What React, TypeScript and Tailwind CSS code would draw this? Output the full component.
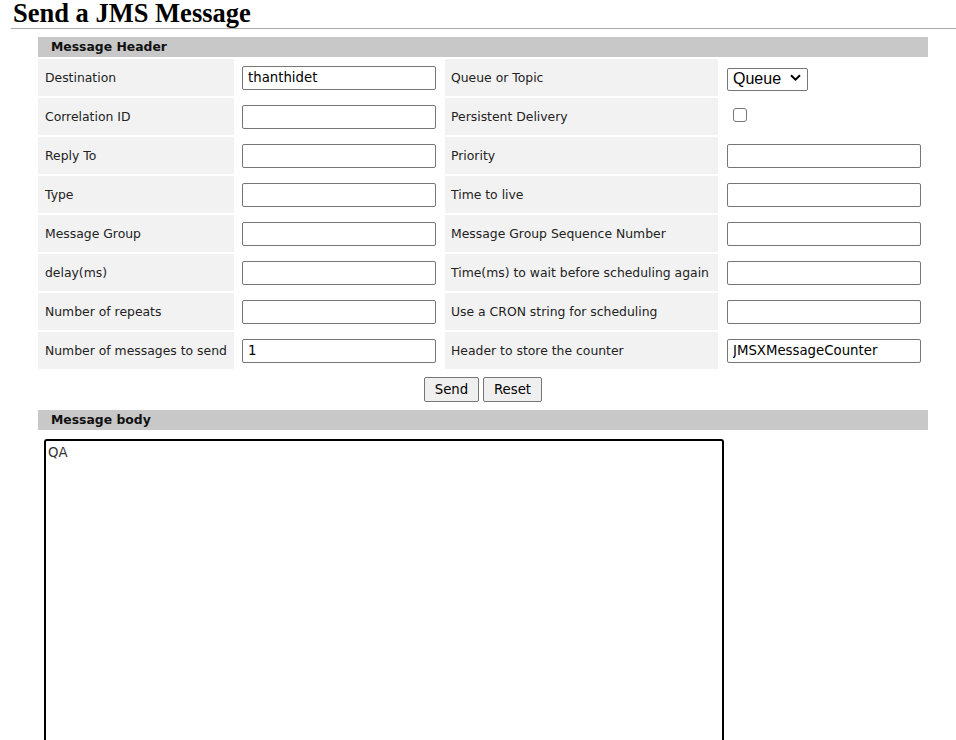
import React from 'react';

const font = { fontFamily: '"DejaVu Sans", Verdana, sans-serif' };

type Row = {
  left: string;
  leftValue?: string;
  right: string;
  rightKind: 'input' | 'select' | 'checkbox';
  rightValue?: string;
};

const rows: Row[] = [
  { left: 'Destination', leftValue: 'thanthidet', right: 'Queue or Topic', rightKind: 'select' },
  { left: 'Correlation ID', right: 'Persistent Delivery', rightKind: 'checkbox' },
  { left: 'Reply To', right: 'Priority', rightKind: 'input' },
  { left: 'Type', right: 'Time to live', rightKind: 'input' },
  { left: 'Message Group', right: 'Message Group Sequence Number', rightKind: 'input' },
  { left: 'delay(ms)', right: 'Time(ms) to wait before scheduling again', rightKind: 'input' },
  { left: 'Number of repeats', right: 'Use a CRON string for scheduling', rightKind: 'input' },
  {
    left: 'Number of messages to send',
    leftValue: '1',
    right: 'Header to store the counter',
    rightKind: 'input',
    rightValue: 'JMSXMessageCounter',
  },
];

const TextBox = ({ value }: { value?: string }) => (
  <input
    type="text"
    defaultValue={value}
    className="w-[194px] h-[24px] border border-[#767676] rounded-[2px] bg-white px-[5px] text-[13.3px] text-black outline-none"
    style={font}
  />
);

const QueueSelect = () => (
  <div className="relative w-[81px] h-[23px]">
    <select
      defaultValue="queue"
      className="appearance-none w-full h-full border border-[#767676] rounded-[2px] bg-white pl-[5px] text-[16px] leading-none text-black outline-none"
      style={{ fontFamily: '"Liberation Sans", Arial, sans-serif' }}
    >
      <option value="queue">Queue</option>
      <option value="topic">Topic</option>
    </select>
    <svg
      className="absolute right-[7px] top-[8px] pointer-events-none"
      width="11"
      height="7"
      viewBox="0 0 11 7"
    >
      <path d="M1 1.2 L5.5 5.6 L10 1.2" fill="none" stroke="#000" strokeWidth="2" />
    </svg>
  </div>
);

const SectionBar = ({ title }: { title: string }) => (
  <div className="h-[20px] bg-[#c8c8c8] pl-[13px] flex items-center">
    <span className="text-[12.4px] font-bold text-[#111]" style={font}>
      {title}
    </span>
  </div>
);

export default function App() {
  return (
    <div className="min-h-screen bg-white pl-[11px]">
      <h1
        className="pl-[2px] h-[28px] text-[26.5px] font-bold leading-[27px] text-black"
        style={{ fontFamily: '"Liberation Serif", "Times New Roman", serif' }}
      >
        Send a JMS Message
      </h1>
      <div className="h-px bg-[#a9a9a9]" />

      <div className="ml-[27px] mt-[8px] w-[890px]">
        <SectionBar title="Message Header" />

        <div className="mt-[2px] grid grid-cols-[196px_207px_273px_208px] gap-[2px]">
          {rows.map((r) => (
            <React.Fragment key={r.left}>
              <div className="h-[37px] bg-[#f2f2f2] pl-[7px] pt-[2px] flex items-center">
                <span className="text-[12.4px] text-[#222] whitespace-nowrap" style={font}>
                  {r.left}
                </span>
              </div>
              <div className="h-[37px] pl-[6px] flex items-center">
                <TextBox value={r.leftValue} />
              </div>
              <div className="h-[37px] bg-[#f2f2f2] pl-[6px] pt-[2px] flex items-center">
                <span className="text-[12.4px] text-[#222] whitespace-nowrap" style={font}>
                  {r.right}
                </span>
              </div>
              <div className="h-[37px] pl-[7px] flex items-center">
                {r.rightKind === 'select' && <QueueSelect />}
                {r.rightKind === 'checkbox' && (
                  <div className="ml-[6px] -mt-[3px] w-[14px] h-[14px] border border-[#767676] rounded-[3px] bg-white" />
                )}
                {r.rightKind === 'input' && <TextBox value={r.rightValue} />}
              </div>
            </React.Fragment>
          ))}
        </div>

        <div className="mt-[8px] flex justify-center gap-[4px]">
          <button
            className="h-[25px] w-[55px] border border-[#767676] rounded-[2px] bg-[#efefef] text-[13.3px] text-black"
            style={font}
          >
            Send
          </button>
          <button
            className="h-[25px] w-[59px] border border-[#767676] rounded-[2px] bg-[#efefef] text-[13.3px] text-black"
            style={font}
          >
            Reset
          </button>
        </div>

        <div className="mt-[8px]">
          <SectionBar title="Message body" />
        </div>

        <textarea
          defaultValue="QA"
          className="block ml-[6px] mt-[9px] w-[680px] h-[320px] border-2 border-black rounded-[3px] px-[2px] py-[2px] text-[13.3px] text-[#333] resize-none outline-none"
          style={font}
        />
      </div>
    </div>
  );
}
